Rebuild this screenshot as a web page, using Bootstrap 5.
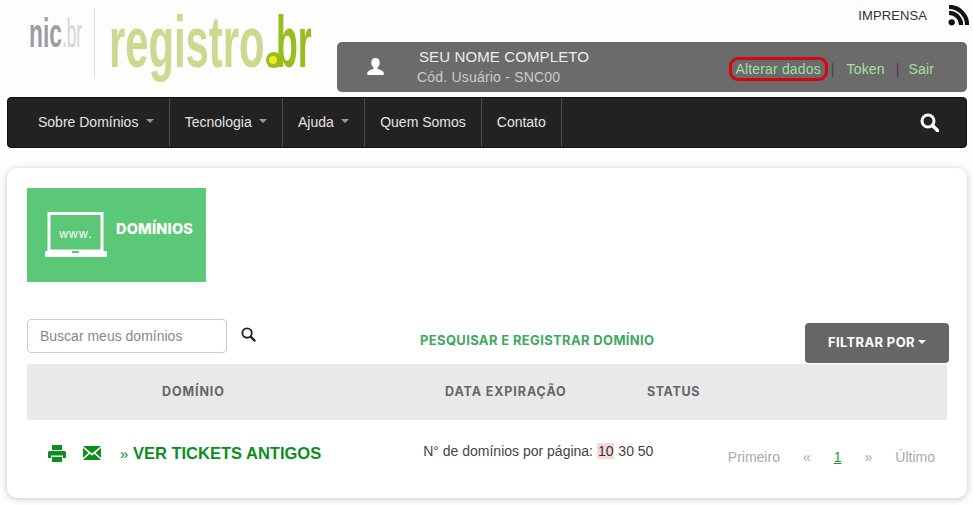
<!DOCTYPE html>
<html lang="pt-BR">
<head>
  <meta charset="UTF-8">
  <meta name="viewport" content="width=device-width, initial-scale=1.0">
  <title>Registro.br</title>
  <link href="https://cdn.jsdelivr.net/npm/bootstrap@5.3.0/dist/css/bootstrap.min.css" rel="stylesheet">
  <style>
    body { background: #fdfdfd; font-family: "Liberation Sans", Arial, sans-serif; font-weight: 400; font-size: 14px; color: #333; width: 973px; height: 505px; overflow: hidden; }
    .page-wrap { padding: 0 6px 0 7px; }
    .top-area { height: 97px; }
    .logo-box { width: 330px; padding-left: 22px; }
    .logo-box svg { display: block; }
    .top-right { width: 630px; }
    .press-row { height: 42px; padding: 5px 0 0 0; margin-right: -2px; }
    .press-link { color: #333; font-size: 13px; letter-spacing: .1px; margin-right: 21px; margin-top: 1px; text-decoration: none; }
    .user-panel { background: #6b6b6b; border-radius: 5px; height: 50px; color: #fff; }
    .user-icon { width: 76px; padding-left: 0; }
    .user-name { font-size: 15px; letter-spacing: .12px; line-height: 20px; color: #eee; padding-left: 6px; }
    .user-code { font-size: 14px; letter-spacing: .2px; line-height: 20px; color: #ccc; padding-left: 4px; }
    .user-links { padding-right: 33px; padding-top: 4px; font-size: 14px; letter-spacing: .15px; color: #444; }
    .user-links a { color: #a4e2a0; text-decoration: none; }
    .user-links .alterar { border: 3px solid #d5060f; border-radius: 9px; padding: 0 4px; line-height: 18px; color: #a4dca0; margin-right: 3px; }
    .user-links .bar-sep { margin: 0 12px 0 0; }
    .user-links .bar-sep-last { margin: 0 9px 0 11px; }
    .main-nav { background: #222; border-radius: 4px; height: 51px; padding: 0; border: 1px solid #111; }
    .main-nav .navbar-nav .nav-link { color: #e4e4e4; font-size: 14px; height: 49px; line-height: 49px; padding: 0 15px; border-right: 1px solid #4a4a4a; }
    .main-nav .navbar-nav .nav-item:first-child .nav-link { padding-left: 30px; }
    .main-nav .dropdown-toggle::after { color: #999; margin-left: 7.35px; border-top-width: 4px; border-left-width: 4px; border-right-width: 4px; }
    .nav-search { margin-right: 27px; }
    .main-card { margin-top: 20px; height: 330px; border: 0; border-radius: 10px; box-shadow: 0 1px 6px rgba(0,0,0,.22); padding: 20px 20px 0; }
    .domain-tile { width: 179px; height: 94px; background: #5ac876; color: #fff; padding-left: 18px; gap: 9px; }
    .domain-tile span { font-family: Inter, sans-serif; font-weight: 800; font-size: 14.5px; letter-spacing: .2px; padding-bottom: 12px; }
    .tools-row { margin-top: 37px; height: 45px; }
    .search-input { width: 200px; height: 34px; font-size: 14px; color: #777; padding: 6px 12px; border-color: #ccc; border-radius: 4px; }
    .search-input::placeholder { color: #888; }
    .search-btn { margin-left: 14px; margin-top: 8px; }
    .search-register { margin-left: 164px; margin-top: 12px; color: #3fa85f; font-family: Inter, sans-serif; font-weight: 700; font-size: 13px; letter-spacing: .35px; text-decoration: none; }
    .filter-btn { width: 144px; height: 40px; margin-left: auto; margin-right: -2px; margin-top: 4px; background: #666; color: #fff; border: 0; font-family: Inter, sans-serif; font-weight: 700; font-size: 13px; letter-spacing: .35px; border-radius: 4px; }
    .filter-btn::after { margin-left: 3px; border-top-width: 4px; border-left-width: 4.5px; border-right-width: 4.5px; }
    .head-row { height: 56px; background: #e9e9e9; color: #666; font-family: Inter, sans-serif; font-weight: 700; font-size: 12.5px; letter-spacing: .9px; }
    .col-domain { width: 418px; padding-left: 135px; }
    .col-expire { width: 202px; }
    .col-state { letter-spacing: .6px; }
    .foot-row { height: 66px; padding: 0 12px 0 21px; }
    .foot-icons { gap: 17px; }
    .tickets-link { color: #0b8e1d; font-size: 16.5px; font-weight: 700; text-decoration: none; margin-left: 19px; }
    .tickets-link small { font-weight: 400; font-size: 15px; }
    .per-page { width: 0; flex-grow: 1; padding-left: 102px; margin-top: -3px; color: #444; font-size: 14px; }
    .per-page mark { background: #f8d7d7; color: #333; padding: 0 1px; }
    .pager-links { color: #aaa; font-size: 14px; gap: 23px; margin-top: 8px; }
    .pager-links a { color: #1f9a2e; }
  </style>
</head>
<body>
<div class="page-wrap">

  <div class="top-area d-flex">
    <div class="logo-box">
      <svg width="300" height="88" viewBox="0 0 300 88">
        <text transform="translate(0 47) scale(.57 1)" font-family="Liberation Sans" font-weight="700" font-size="40" fill="#9b9da0">nic</text>
        <text transform="translate(33 47) scale(.43 1)" font-family="Liberation Sans" font-size="40" fill="#d3d5d8">.br</text>
        <rect x="65" y="8" width="1" height="69" fill="#ddd"/>
        <text transform="translate(80 67) scale(.58 1)" font-family="Liberation Sans" font-weight="700" font-size="72" fill="#cdd98f">registro</text>
        <text transform="translate(237 67) scale(.496 1)" font-family="Liberation Sans" font-weight="700" font-size="72" fill="#97bd1f">.br</text>
        <circle cx="245" cy="60" r="8" fill="#97bd1f"/>
        <circle cx="244" cy="60" r="4" fill="#f2e91c"/>
      </svg>
    </div>
    <div class="top-right">
      <div class="press-row d-flex justify-content-end align-items-start">
        <a class="press-link" href="#">IMPRENSA</a>
        <svg width="21" height="21" viewBox="0 0 20 20"><circle cx="3.500" cy="16.500" r="3" fill="#111"/><path d="M1 7.500a11.500 11.500 0 0 1 11.500 11.500M1 1.800A17.200 17.200 0 0 1 18.200 19" fill="none" stroke="#111" stroke-width="4"/></svg>
      </div>
      <div class="user-panel d-flex align-items-center">
        <div class="user-icon d-flex justify-content-center">
          <svg width="17" height="18" viewBox="0 0 17 18"><path d="M8.500 0c2.700 0 4.200 2 4.200 4.700 0 2-1 3.900-2.200 4.800v1.300c2.600 1 5.300 2.100 6.200 3.500v2.700H.3v-2.700c.9-1.400 3.600-2.500 6.200-3.500V9.500C5.300 8.600 4.300 6.700 4.300 4.700 4.300 2 5.800 0 8.500 0z" fill="#fff"/></svg>
        </div>
        <div class="flex-grow-1">
          <div class="user-name">SEU NOME COMPLETO</div>
          <div class="user-code">Cód. Usuário - SNC00</div>
        </div>
        <div class="user-links d-flex align-items-center">
          <a class="alterar" href="#">Alterar dados</a>
          <span class="bar-sep">|</span>
          <a href="#">Token</a>
          <span class="bar-sep-last">|</span>
          <a href="#">Sair</a>
        </div>
      </div>
    </div>
  </div>

  <nav class="navbar navbar-expand main-nav">
    <ul class="navbar-nav">
      <li class="nav-item"><a class="nav-link dropdown-toggle" href="#">Sobre Domínios</a></li>
      <li class="nav-item"><a class="nav-link dropdown-toggle" href="#">Tecnologia</a></li>
      <li class="nav-item"><a class="nav-link dropdown-toggle" href="#">Ajuda</a></li>
      <li class="nav-item"><a class="nav-link" href="#">Quem Somos</a></li>
      <li class="nav-item"><a class="nav-link" href="#">Contato</a></li>
    </ul>
    <svg class="ms-auto nav-search" width="19" height="19" viewBox="0 0 19 19"><circle cx="8" cy="8" r="6" fill="none" stroke="#fff" stroke-width="3"/><path d="M12.500 12.500l5 5" stroke="#fff" stroke-width="3.600" stroke-linecap="round"/></svg>
  </nav>

  <div class="card main-card">
    <div class="domain-tile d-flex align-items-center">
      <svg width="62" height="46" viewBox="0 0 62 46">
        <path d="M4 1.500h53V39H4z" fill="none" stroke="#fff" stroke-width="3"/>
        <rect x="0" y="39" width="62" height="6" rx="1" fill="#fff"/>
        <rect x="27" y="39" width="7" height="2" fill="#5ac876"/>
        <text x="31" y="26" text-anchor="middle" font-family="Liberation Sans" font-size="12" fill="#fff" letter-spacing="1.200">www.</text>
      </svg>
      <span>DOMÍNIOS</span>
    </div>

    <div class="tools-row d-flex align-items-start">
      <input class="form-control search-input" type="text" placeholder="Buscar meus domínios">
      <svg class="search-btn" width="15" height="15" viewBox="0 0 16 16"><circle cx="6.500" cy="6.500" r="5" fill="none" stroke="#222" stroke-width="2"/><path d="M10.500 10.500l4 4" stroke="#222" stroke-width="2.400" stroke-linecap="round"/></svg>
      <a class="search-register" href="#">PESQUISAR E REGISTRAR DOMÍNIO</a>
      <button class="btn dropdown-toggle filter-btn" type="button">FILTRAR POR</button>
    </div>

    <div class="head-row d-flex align-items-center">
      <div class="col-domain">DOMÍNIO</div>
      <div class="col-expire">DATA EXPIRAÇÃO</div>
      <div class="col-state">STATUS</div>
    </div>

    <div class="foot-row d-flex align-items-center">
      <div class="foot-icons d-flex align-items-center">
        <svg width="18" height="17" viewBox="0 0 18 17"><path d="M4 0h10v5H4zM1.500 6h15A1.500 1.500 0 0 1 18 7.500V13h-3v-2.500H3V13H0V7.500A1.500 1.500 0 0 1 1.500 6zM4 12h10v5H4z" fill="#0b8e1d"/></svg>
        <svg width="18" height="14" viewBox="0 0 18 14"><path d="M0 0h18L9 7.500zM0 2l5.500 4.700L0 12zM18 2l-5.500 4.700L18 12zM6.800 7.800L9 9.700l2.200-1.900L18 14H0z" fill="#0b8e1d"/></svg>
      </div>
      <a class="tickets-link" href="#"><small>»</small> VER TICKETS ANTIGOS</a>
      <div class="per-page">N° de domínios por página: <mark>10</mark> 30 50</div>
      <div class="pager-links d-flex">
        <span>Primeiro</span><span>«</span><a href="#">1</a><span>»</span><span>Último</span>
      </div>
    </div>
  </div>

</div>
<script src="https://cdn.jsdelivr.net/npm/bootstrap@5.3.0/dist/js/bootstrap.bundle.min.js"></script>
</body>
</html>
